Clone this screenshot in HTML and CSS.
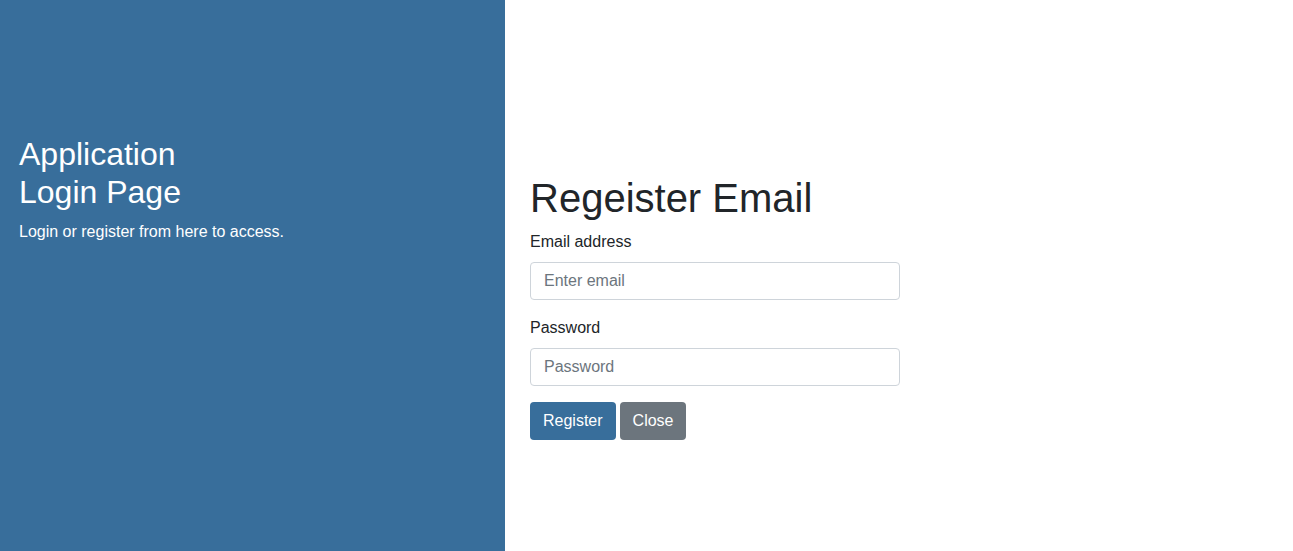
FILE: index.html
```html
<!DOCTYPE html>
<html lang="en">
<head>
<meta charset="utf-8">
<title>Application Login Page</title>
<link rel="stylesheet" href="styles.css">
</head>
<body>
<div class="page">
  <aside class="side">
    <div class="side-text">
      <h2 class="side-title">Application<br>Login Page</h2>
      <p class="side-sub">Login or register from here to access.</p>
    </div>
  </aside>
  <main class="main">
    <form class="form">
      <h1 class="form-title">Regeister Email</h1>
      <div class="form-group">
        <label class="label" for="email">Email address</label>
        <input class="input" id="email" type="email" placeholder="Enter email">
      </div>
      <div class="form-group">
        <label class="label" for="pw">Password</label>
        <input class="input" id="pw" type="password" placeholder="Password">
      </div>
      <div class="actions">
        <button type="button" class="btn btn-primary">Register</button>
        <button type="button" class="btn btn-secondary">Close</button>
      </div>
    </form>
  </main>
</div>
</body>
</html>
```
FILE: styles.css
```css
* { box-sizing: border-box; }
html, body { margin: 0; padding: 0; height: 100%; }
body {
  font-family: "Liberation Sans", Arial, sans-serif;
  font-size: 16px;
  line-height: 1.5;
  color: #212529;
  background: #fff;
}
.page {
  display: flex;
  height: 551px;
}
.side {
  width: 505px;
  flex: none;
  background: #386e9b;
  color: #fff;
  padding: 135px 19px 0;
}
.side-title {
  margin: 0 0 8px;
  font-size: 32px;
  font-weight: 400;
  line-height: 1.2;
}
.side-sub {
  margin: 0;
  font-size: 16px;
}
.main {
  flex: 1;
  padding: 174px 25px 0;
}
.form { width: 370px; }
.form-title {
  margin: 0 0 8px;
  font-size: 40px;
  font-weight: 400;
  line-height: 1.2;
}
.form-group { margin-bottom: 16px; }
.label {
  display: block;
  margin-bottom: 8px;
}
.input {
  display: block;
  width: 100%;
  height: 38px;
  padding: 6px 13px;
  font-family: inherit;
  font-size: 16px;
  line-height: 1.5;
  color: #495057;
  border: 1px solid #ced4da;
  border-radius: 4px;
  background: #fff;
}
.input::placeholder { color: #6c757d; }
.actions { display: flex; gap: 4px; }
.btn {
  height: 38px;
  padding: 6px 12px;
  font-family: inherit;
  font-size: 16px;
  line-height: 1.5;
  color: #fff;
  border: 1px solid transparent;
  border-radius: 4px;
}
.btn-primary { background: #386e9b; }
.btn-secondary { background: #6c757d; }
```
